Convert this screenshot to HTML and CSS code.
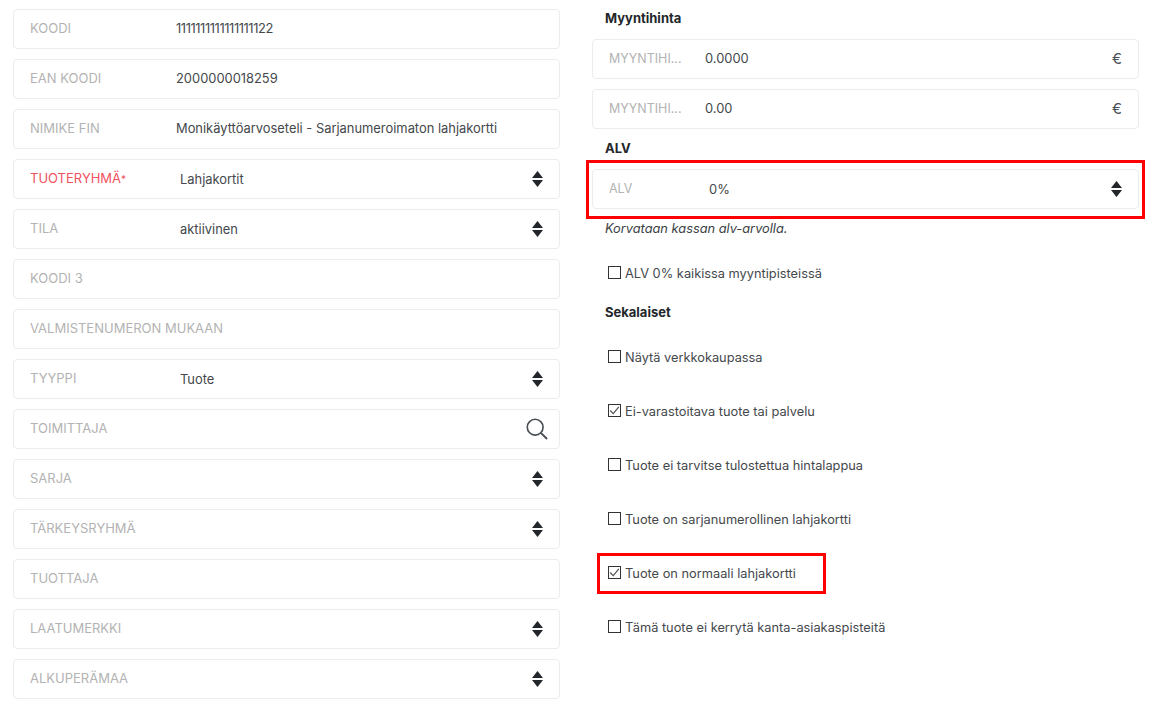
FILE: index.html
```html
<!DOCTYPE html>
<html lang="fi">
<head>
<meta charset="utf-8">
<title>Tuote</title>
<link rel="stylesheet" href="styles.css">
</head>
<body>
<svg class="defs" width="0" height="0" aria-hidden="true">
  <symbol id="updown" viewBox="0 0 11 16"><path d="M5.5 0 11 7H0Z"/><path d="M0 9H11L5.5 16Z"/></symbol>
  <symbol id="search" viewBox="0 0 24 24"><circle cx="10" cy="10" r="8.6" fill="none" stroke="#4a4f55" stroke-width="1.8"/><path d="M16.2 16.2 23 23" fill="none" stroke="#4a4f55" stroke-width="2.2"/></symbol>
  <symbol id="tick" viewBox="0 0 14 14"><path d="M1.5 7 5.4 11 12.5 2.5" fill="none" stroke="#555" stroke-width="1.6"/></symbol>
</svg>
<main class="page">
  <section class="col col-left">
    <div class="field"><span class="label">KOODI</span><span class="value ones">1111111111111111122</span></div>
    <div class="field"><span class="label">EAN KOODI</span><span class="value">2000000018259</span></div>
    <div class="field"><span class="label">NIMIKE FIN</span><span class="value">Monikäyttöarvoseteli - Sarjanumeroimaton lahjakortti</span></div>
    <div class="field"><span class="label required">TUOTERYHMÄ<span class="star">*</span></span><span class="value select">Lahjakortit</span><svg class="updown"><use href="#updown"/></svg></div>
    <div class="field"><span class="label">TILA</span><span class="value select">aktiivinen</span><svg class="updown"><use href="#updown"/></svg></div>
    <div class="field"><span class="label">KOODI 3</span></div>
    <div class="field"><span class="label wide">VALMISTENUMERON MUKAAN</span></div>
    <div class="field"><span class="label">TYYPPI</span><span class="value select">Tuote</span><svg class="updown"><use href="#updown"/></svg></div>
    <div class="field"><span class="label">TOIMITTAJA</span><svg class="search"><use href="#search"/></svg></div>
    <div class="field"><span class="label">SARJA</span><svg class="updown"><use href="#updown"/></svg></div>
    <div class="field"><span class="label">TÄRKEYSRYHMÄ</span><svg class="updown"><use href="#updown"/></svg></div>
    <div class="field"><span class="label">TUOTTAJA</span></div>
    <div class="field"><span class="label">LAATUMERKKI</span><svg class="updown"><use href="#updown"/></svg></div>
    <div class="field"><span class="label">ALKUPERÄMAA</span><svg class="updown"><use href="#updown"/></svg></div>
  </section>
  <section class="col col-right">
    <h2 class="heading first">Myyntihinta</h2>
    <div class="field short"><span class="label narrow">MYYNTIHI...</span><span class="value price">0.0000</span><span class="euro">€</span></div>
    <div class="field short"><span class="label narrow">MYYNTIHI...</span><span class="value price">0.00</span><span class="euro">€</span></div>
    <h2 class="heading alv">ALV</h2>
    <div class="highlight-wrap">
      <div class="field short"><span class="label narrow">ALV</span><span class="value alv-value">0%</span><svg class="updown"><use href="#updown"/></svg></div>
      <div class="redbox redbox-alv"></div>
    </div>
    <p class="note">Korvataan kassan alv-arvolla.</p>
    <div class="check first-check"><span class="box"></span>ALV 0% kaikissa myyntipisteissä</div>
    <h2 class="heading misc">Sekalaiset</h2>
    <div class="checks">
      <div class="check"><span class="box"></span>Näytä verkkokaupassa</div>
      <div class="check"><span class="box"><svg class="tick"><use href="#tick"/></svg></span>Ei-varastoitava tuote tai palvelu</div>
      <div class="check"><span class="box"></span>Tuote ei tarvitse tulostettua hintalappua</div>
      <div class="check"><span class="box"></span>Tuote on sarjanumerollinen lahjakortti</div>
      <div class="check highlight-wrap"><span class="box"><svg class="tick"><use href="#tick"/></svg></span>Tuote on normaali lahjakortti<div class="redbox redbox-check"></div></div>
      <div class="check"><span class="box"></span>Tämä tuote ei kerrytä kanta-asiakaspisteitä</div>
    </div>
  </section>
</main>
</body>
</html>
```
FILE: styles.css
```css
* { box-sizing: border-box; }
html, body { margin: 0; padding: 0; background: #fff; }
body {
  font-family: Inter, "Liberation Sans", sans-serif;
  font-size: 12.9px;
  color: #44484c;
  height: 716px;
  overflow: hidden;
}
.defs { position: absolute; }
.page {
  display: grid;
  grid-template-columns: 547px 547px;
  column-gap: 32px;
  padding: 9px 0 0 13px;
}
.col { display: flex; flex-direction: column; }
.col-left { gap: 10px; }
.field {
  display: flex;
  align-items: center;
  height: 40px;
  flex: none;
  padding: 0 16px 0 16px;
  border: 1px solid #ececec;
  border-radius: 4px;
  background: #fff;
}
.label {
  width: 146px;
  flex: none;
  font-size: 13px;
  color: #b3b3b3;
  white-space: nowrap;
  position: relative;
  top: -1px;
}
.label.required { color: #f0525f; }
.star { font-size: 10px; }
.label.wide { width: auto; }
.label.narrow { width: 96px; font-size: 12.5px; }
.value { white-space: nowrap; position: relative; top: -1px; }
.value.ones { letter-spacing: -0.42px; }
.value.select { top: 0; margin-left: 4px; }
.value.alv-value { margin-left: 4px; top: 0; }
.updown { width: 11px; height: 16px; margin-left: auto; fill: #22262a; }
.search { width: 22px; height: 22px; margin-left: auto; margin-right: -5px; }
.euro { margin-left: auto; font-size: 15px; color: #4a4f55; position: relative; top: -1px; }
.heading { margin: 0; font-size: 13px; font-weight: 700; color: #23272b; line-height: 16px; padding-left: 13px; }
.heading.first { margin-top: 1px; margin-bottom: 13px; }
.heading.alv { margin-top: 11px; margin-bottom: 13px; }
.heading.misc { margin-top: 22px; }
.col-right > .field + .field { margin-top: 10px; }
.highlight-wrap { position: relative; }
.redbox { position: absolute; border: 3px solid #f00; pointer-events: none; }
.redbox-alv { left: -6px; top: -9px; width: 559px; height: 59px; }
.redbox-check { left: -11px; top: -13px; width: 229px; height: 41px; }
.note { margin: 12px 0 0; padding-left: 13px; font-style: italic; font-size: 12.8px; line-height: 16px; color: #3a3e42; }
.check {
  display: flex;
  align-items: center;
  height: 16px;
  margin-left: 16px;
  font-size: 12.8px;
  line-height: 16px;
  white-space: nowrap;
}
.first-check { margin-top: 29px; }
.box {
  width: 13px;
  height: 13px;
  margin-right: 4px;
  border: 1px solid #333;
  flex: none;
  display: flex;
  position: relative;
  top: -2px;
}
.tick { width: 11px; height: 11px; }
.checks { display: flex; flex-direction: column; gap: 38px; margin-top: 30px; }
```
